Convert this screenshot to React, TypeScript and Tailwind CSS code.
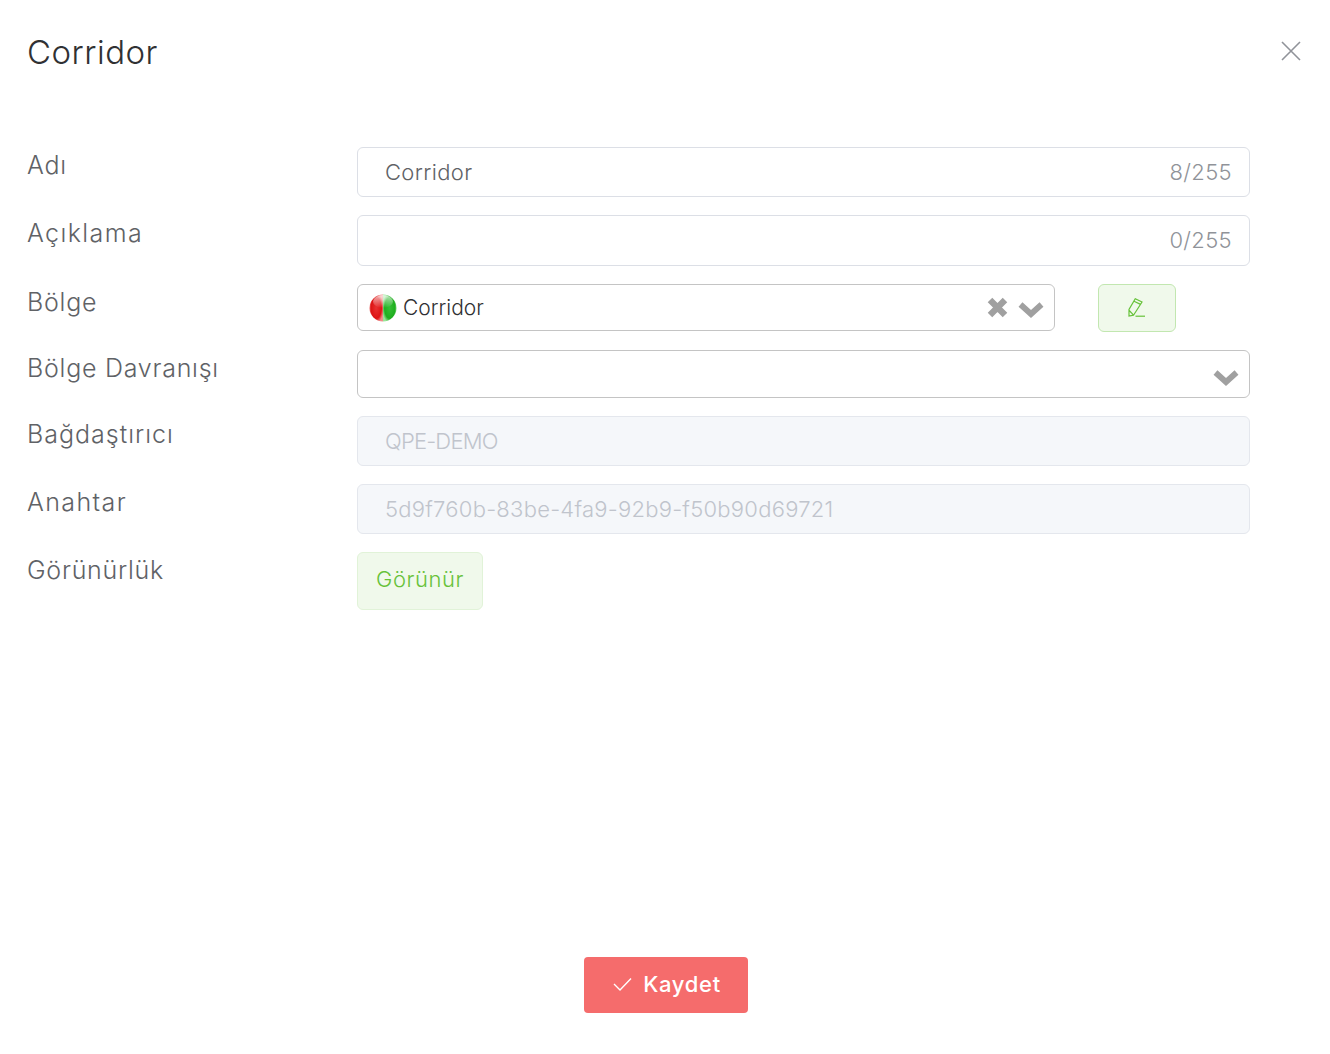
import React from "react";

const Row = ({ label, children, track = "tracking-[0.75px]" }: { label: string; children: React.ReactNode; track?: string }) => (
  <div className="flex items-start">
    <div className={`w-[330px] shrink-0 pt-[2px] text-[25px] leading-[32px] font-light text-[#606266] ${track}`}>{label}</div>
    <div className="w-[893px] shrink-0">{children}</div>
  </div>
);

const Chevron = () => (
  <svg width="26" height="17" viewBox="0 0 26 17" fill="none">
    <path d="M2.5 3.5 L13 13 L23.5 3.5" stroke="#a0a0a0" strokeWidth="5.8" />
  </svg>
);

export default function App() {
  return (
    <div className="relative h-[1054px] w-[1330px] overflow-hidden bg-white font-['Inter','Liberation_Sans',sans-serif]">
      <div className="flex items-start justify-between pl-[27px] pr-[29px] pt-[30px]">
        <h1 className="text-[33px] leading-[44px] font-light tracking-[0.5px] text-[#303133]">Corridor</h1>
        <svg className="mt-[11px]" width="20" height="20" viewBox="0 0 20 20" fill="none">
          <path d="M1 1 L19 19 M19 1 L1 19" stroke="#909399" strokeWidth="1.6" />
        </svg>
      </div>

      <div className="mt-[73px] flex flex-col gap-[18px] pl-[27px]">
        <Row label="Adı">
          <div className="flex h-[50px] items-center justify-between rounded-[6px] border border-[#dcdfe6] pl-[27px] pr-[17px] text-[22px] font-light tracking-[0.35px] text-[#606266]">
            <span>Corridor</span>
            <span className="text-[#909399]">8/255</span>
          </div>
        </Row>
        <Row label="Açıklama" track="tracking-[1.4px]">
          <div className="flex h-[51px] items-center justify-end rounded-[6px] border border-[#dcdfe6] pr-[17px] text-[22px] font-light tracking-[0.35px] text-[#909399]">
            0/255
          </div>
        </Row>
        <Row label="Bölge">
          <div className="flex items-start gap-[43px]">
            <div className="flex h-[47px] w-[698px] items-center rounded-[6px] border border-[#c4c4c4] pl-[11px] pr-[10px]">
              <svg width="28" height="28" viewBox="0 0 28 28" className="shrink-0">
                <defs>
                  <radialGradient id="r" cx="0.5" cy="0.5" r="0.55">
                    <stop offset="0" stopColor="#e83030" />
                    <stop offset="0.7" stopColor="#dd1414" />
                    <stop offset="1" stopColor="#f08a8a" />
                  </radialGradient>
                  <radialGradient id="g" cx="0.5" cy="0.5" r="0.55">
                    <stop offset="0" stopColor="#35c035" />
                    <stop offset="0.7" stopColor="#1fae1f" />
                    <stop offset="1" stopColor="#98e498" />
                  </radialGradient>
                  <linearGradient id="s" x1="0" y1="0" x2="0" y2="1">
                    <stop offset="0" stopColor="#ffffff" stopOpacity="0.7" />
                    <stop offset="1" stopColor="#ffffff" stopOpacity="0" />
                  </linearGradient>
                </defs>
                <path d="M14 0.5 A13.5 13.5 0 0 0 14 27.5 Z" fill="url(#r)" />
                <path d="M14 0.5 A13.5 13.5 0 0 1 14 27.5 Z" fill="url(#g)" />
                <ellipse cx="14" cy="7.5" rx="10" ry="6.5" fill="url(#s)" />
              </svg>
              <span className="ml-[6px] text-[21px] font-light text-[#303133]">Corridor</span>
              <svg className="ml-auto mr-[-1px]" width="23" height="21" viewBox="0 0 23 21" fill="none">
                <path d="M4 3 L19 18 M19 3 L4 18" stroke="#a0a0a0" strokeWidth="6.4" />
              </svg>
              <span className="ml-[10px] mt-[4px] flex"><Chevron /></span>
            </div>
            <div className="flex h-[48px] w-[78px] items-center justify-center rounded-[6px] border border-[#c2e7b0] bg-[#f0f9eb]">
              <svg width="18" height="20" viewBox="0 0 18 20" fill="none" stroke="#67c23a" strokeWidth="1.2">
                <path d="M7.3 0.7 L14 4 L5.5 17.2 L1 18 L1 11.5 Z M6 3.2 L12.6 6.4 M1.2 12.5 L5.4 16.8" />
                <path d="M7.5 18.2 H17" />
              </svg>
            </div>
          </div>
        </Row>
        <Row label="Bölge Davranışı">
          <div className="flex h-[48px] items-center justify-end rounded-[6px] border border-[#c4c4c4] pr-[10px]">
            <span className="mt-[7px] flex"><Chevron /></span>
          </div>
        </Row>
        <Row label="Bağdaştırıcı" track="tracking-[1px]">
          <div className="flex h-[50px] items-center rounded-[6px] border border-[#e4e7ed] bg-[#f5f7fa] pl-[27px] text-[22px] font-light tracking-[-0.8px] text-[#c0c4cc]">
            QPE-DEMO
          </div>
        </Row>
        <Row label="Anahtar" track="tracking-[1.4px]">
          <div className="flex h-[50px] items-center rounded-[6px] border border-[#e4e7ed] bg-[#f5f7fa] pl-[27px] text-[22px] font-light tracking-[0.25px] text-[#c0c4cc]">
            5d9f760b-83be-4fa9-92b9-f50b90d69721
          </div>
        </Row>
        <Row label="Görünürlük">
          <div className="flex h-[58px] w-[126px] items-center justify-center rounded-[6px] border border-[#e1f3d8] bg-[#f0f9eb] pb-[3px] text-[22px] font-light tracking-[0.55px] text-[#67c23a]">
            Görünür
          </div>
        </Row>
      </div>

      <div className="absolute bottom-[41px] left-0 right-0 flex justify-center pl-[2px]">
        <button className="flex h-[56px] w-[164px] items-center justify-center gap-[11px] rounded-[4px] bg-[#f56c6c] pb-[2px] pl-[2px] text-[22px] font-medium tracking-[0.7px] text-white">
          <svg width="19" height="14" viewBox="0 0 19 14" fill="none" stroke="#ffffff" strokeWidth="1.4">
            <path d="M1 7 L7 13 L18 1.5" />
          </svg>
          <span>Kaydet</span>
        </button>
      </div>
    </div>
  );
}
